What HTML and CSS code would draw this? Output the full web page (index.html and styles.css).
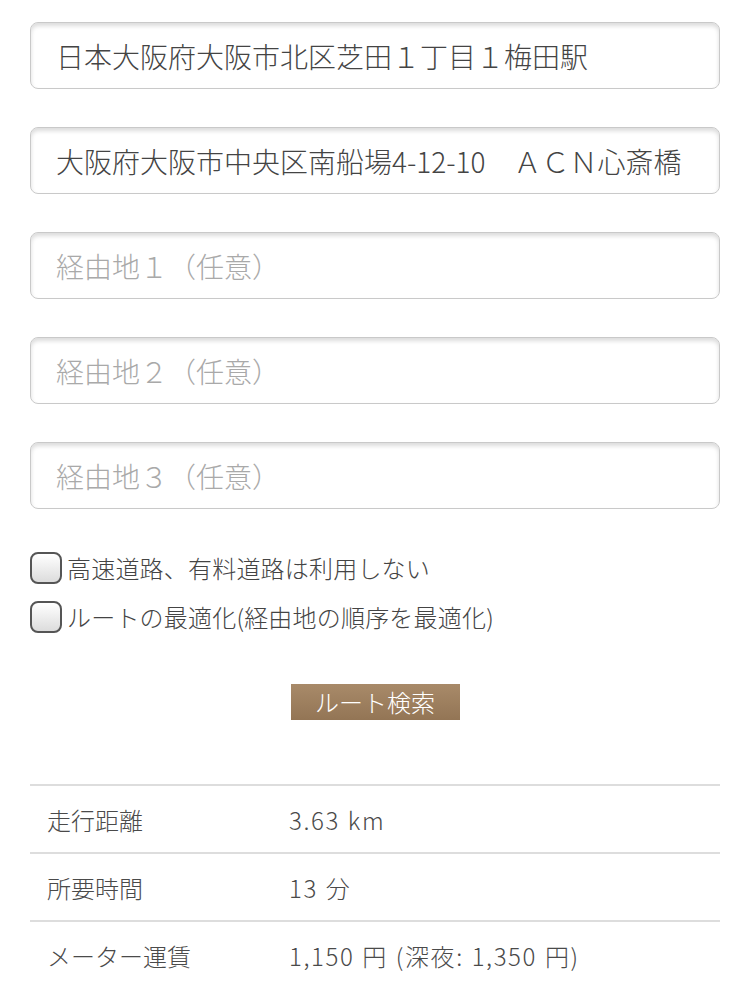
FILE: index.html
```html
<!DOCTYPE html>
<html lang="ja">
<head>
    <meta charset="UTF-8">
    <meta name="viewport" content="width=device-width, initial-scale=1.0">
    <title>ルート検索</title>
    <link rel="stylesheet" href="styles.css">
</head>
<body>
    <div class="container">
        <div class="points">
            <input class="point" type="text" value="日本大阪府大阪市北区芝田１丁目１梅田駅">
            <input class="point" type="text" value="大阪府大阪市中央区南船場4-12-10　ＡＣＮ心斎橋">
            <input class="point" type="text" placeholder="経由地１（任意）">
            <input class="point" type="text" placeholder="経由地２（任意）">
            <input class="point" type="text" placeholder="経由地３（任意）">
        </div>

        <div class="options">
            <label class="option"><input type="checkbox"> 高速道路、有料道路は利用しない</label>
            <label class="option"><input type="checkbox"> ルートの最適化(経由地の順序を最適化)</label>
        </div>

        <div class="search">
            <button class="searchbutton">ルート検索</button>
        </div>

        <table class="result">
            <tr>
                <th>走行距離</th>
                <td>3.63 km</td>
            </tr>
            <tr>
                <th>所要時間</th>
                <td>13 分</td>
            </tr>
            <tr>
                <th>メーター運賃</th>
                <td>1,150 円 (深夜: 1,350 円)</td>
            </tr>
        </table>
    </div>
</body>
</html>
```

FILE: styles.css
```css
body {
    font-family: "Noto Sans CJK JP", "Noto Sans", sans-serif;
    font-weight: 300;
    color: #444;
    margin: 0;
    background: #ffffff;
}

.container {
    padding: 22px 30px 0 30px;
}

.points {
    display: flex;
    flex-direction: column;
    gap: 38px;
}

input.point {
    -webkit-appearance: none;
    appearance: none;
    box-sizing: border-box;
    width: 100%;
    height: 67px;
    padding: 0 25px;
    border: 1px solid #c9c9c9;
    border-radius: 8px;
    box-shadow: inset 0 3px 4px rgba(0, 0, 0, 0.14);
    font-family: inherit;
    font-weight: 300;
    font-size: 28px;
    color: #444;
    background: #fff;
    outline: none;
}

input.point::placeholder {
    color: #a9a9a9;
}

.options {
    margin-top: 34px;
}

.option {
    display: flex;
    align-items: center;
    height: 49px;
    font-size: 24px;
    letter-spacing: 0.2px;
    color: #444;
}

.option input {
    -webkit-appearance: none;
    appearance: none;
    box-sizing: border-box;
    width: 32px;
    height: 32px;
    margin: 0 5px 0 0;
    border: 2px solid #555;
    border-radius: 8px;
    background: linear-gradient(#ffffff, #dcdcdc);
}

.search {
    margin-top: 43px;
    text-align: center;
}

.searchbutton {
    width: 169px;
    height: 36px;
    padding: 0;
    border: none;
    background: linear-gradient(#a88a69, #937555);
    color: #fff;
    font-family: inherit;
    font-weight: 300;
    font-size: 24px;
    line-height: 36px;
}

.result {
    margin-top: 64px;
    width: 100%;
    border-collapse: collapse;
    font-size: 24px;
    color: #4a4a4a;
}

.result tr {
    border-top: 2px solid #dddddd;
}

.result th,
.result td {
    height: 66px;
    padding: 0;
    text-align: left;
    font-weight: 300;
}

.result th {
    width: 242px;
    padding-left: 17px;
}

.result td {
    letter-spacing: 1.6px;
    word-spacing: 1px;
}
```
